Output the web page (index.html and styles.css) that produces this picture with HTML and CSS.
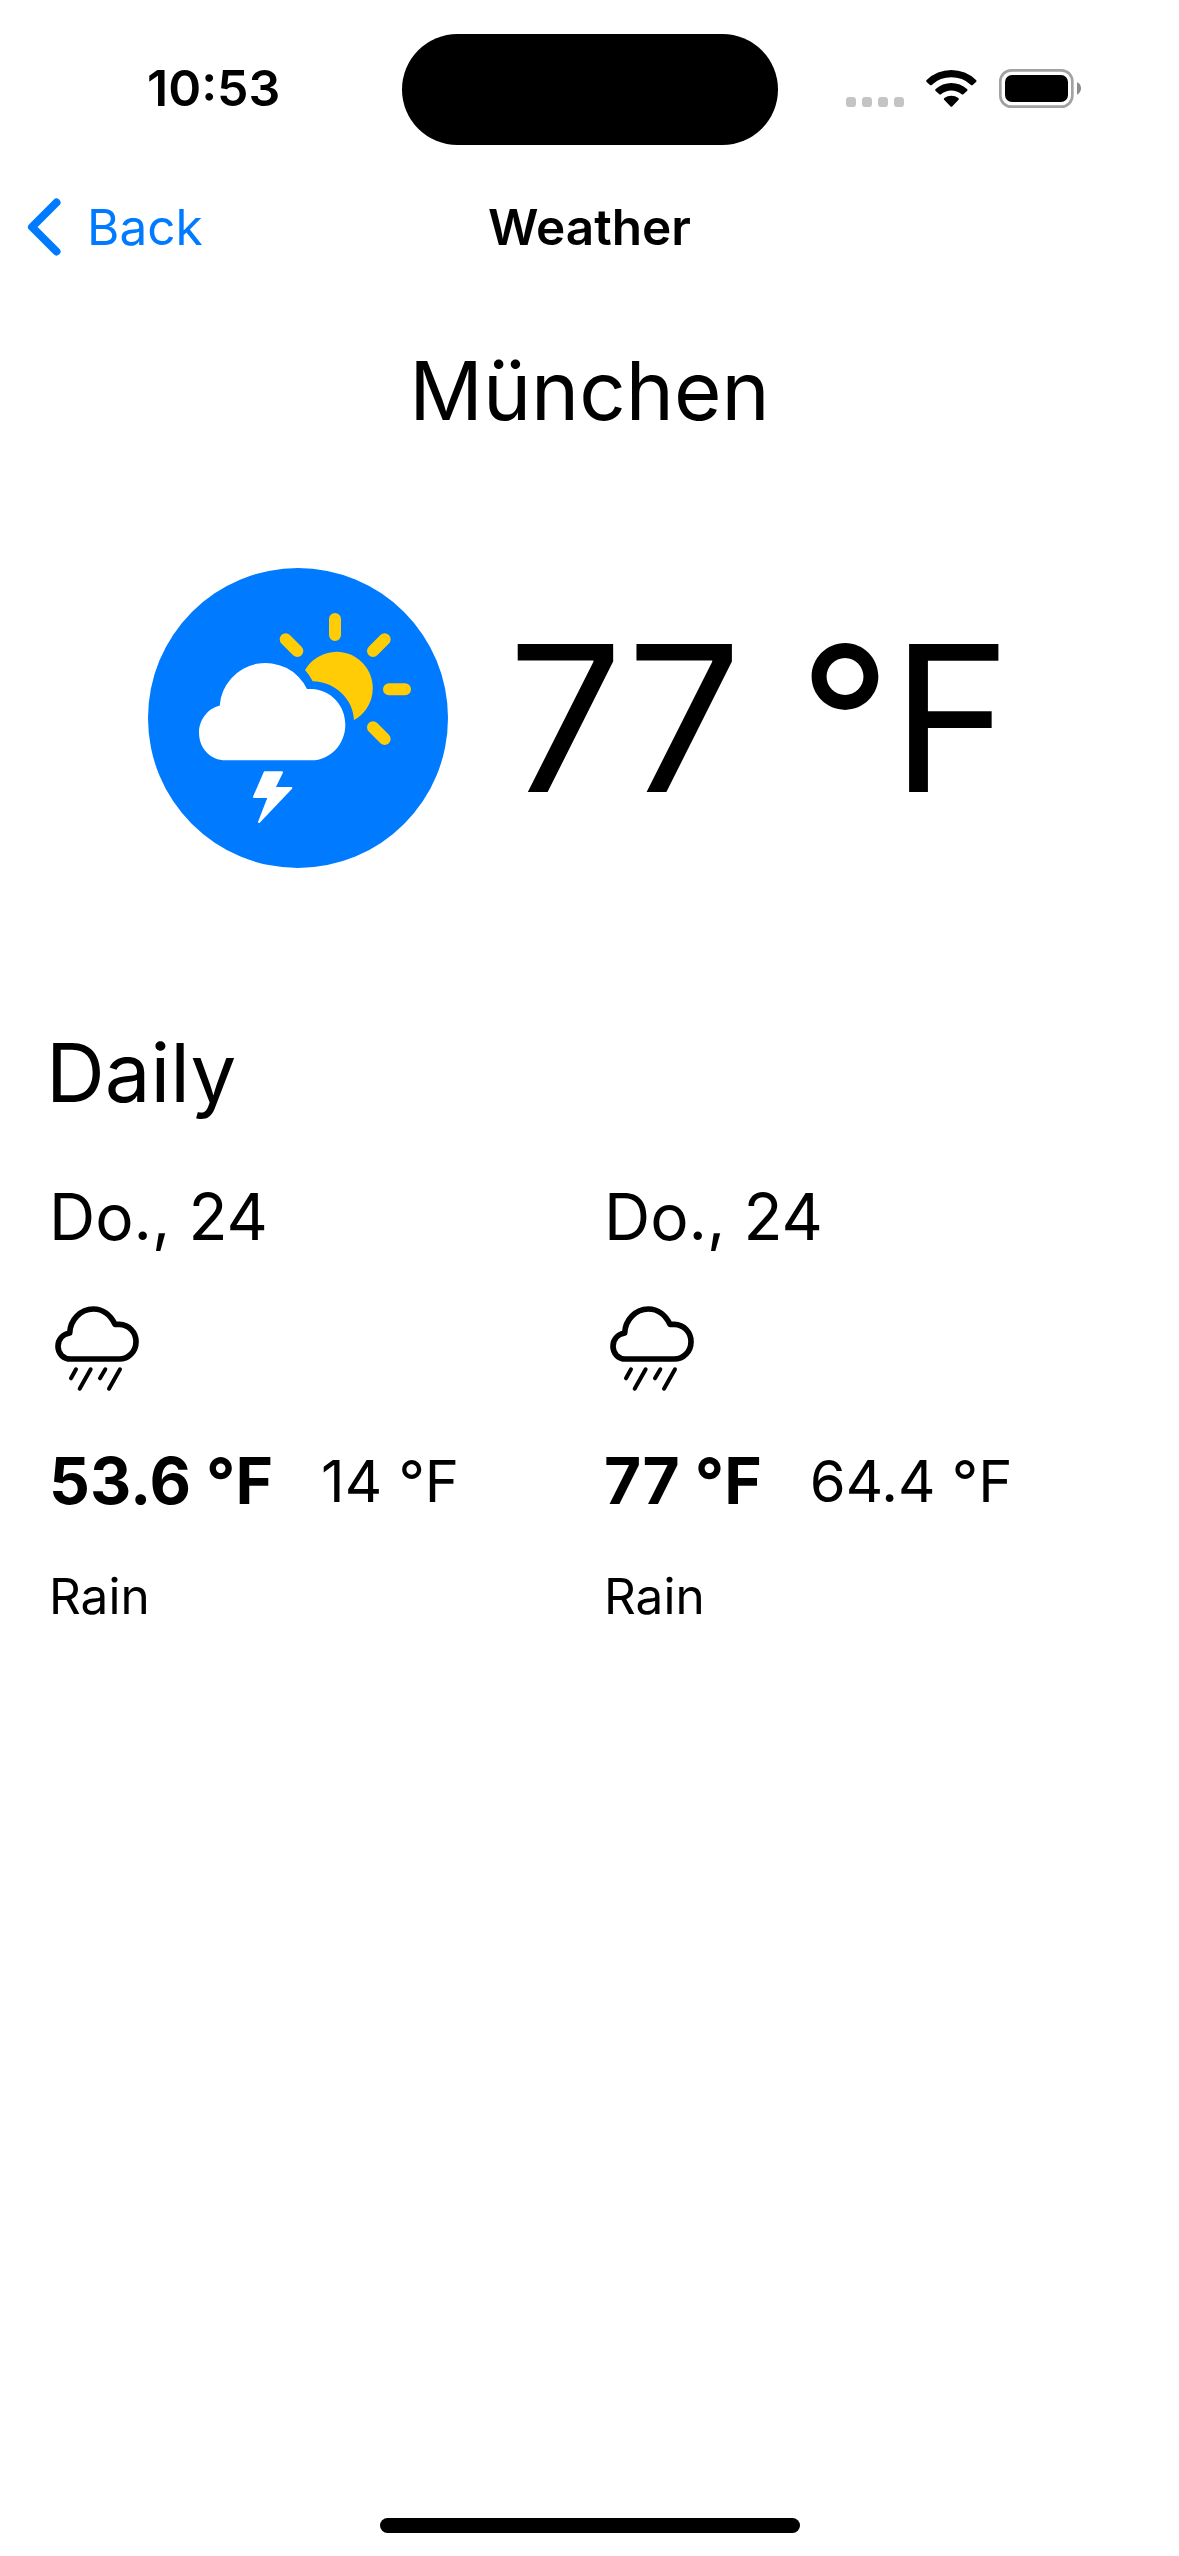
FILE: index.html
```html
<!DOCTYPE html>
<html lang="de">
<head>
<meta charset="utf-8">
<title>Weather</title>
<link rel="stylesheet" href="styles.css">
</head>
<body>
<svg class="sprite" aria-hidden="true">
  <symbol id="rain" viewBox="57 60 288 288">
    <path class="rain-cloud" d="M122 237C100 237 84 221 84 199C84 178 98 163 119 159C121 119 152 87 190 87C219 87 242 106 255 133L268 133C297 134 318 157 318 185C318 214 296 237 267 237Z"/>
    <path class="rain-drops" d="M138 268L123 295M182 268L149 326M226 268L210 295M270 268L237 326"/>
  </symbol>
</svg>
<div class="screen">
  <header class="status">
    <span class="time">10:53</span>
    <div class="island"></div>
    <svg class="status-icons" viewBox="198 108 708 126">
      <g fill="#c4c4c4">
        <rect x="198" y="198" width="30" height="30" rx="10"/>
        <rect x="246" y="198" width="30" height="30" rx="10"/>
        <rect x="294" y="198" width="30" height="30" rx="10"/>
        <rect x="342" y="198" width="30" height="30" rx="10"/>
      </g>
      <path d="M440 147A106 106 0 0 1 588 147Q591 150 588 153L578 162Q575 164 572 161A86 86 0 0 0 456 161Q453 164 450 162L440 153Q437 150 440 147ZM467 174A70 70 0 0 1 561 174Q564 177 561 180L550 190Q547 192 544 189A48 48 0 0 0 484 189Q481 192 478 190L467 180Q464 177 467 174ZM493 201A35 35 0 0 1 535 201Q538 204 535 207L517 226Q514 229 511 226L493 207Q490 204 493 201Z"/>
      <rect x="661" y="118" width="216" height="109" rx="33" fill="none" stroke="#a2a2a2" stroke-width="8"/>
      <rect x="675" y="132" width="189" height="81" rx="21"/>
      <path d="M891 153Q903 159 903 171.500Q903 184 891 191Z" fill="#8c8c8c"/>
    </svg>
  </header>
  <nav class="nav">
    <a class="back">
      <svg class="chevron" viewBox="0 0 34 58"><path d="M29.500 4.500L5 29L29.500 53.500"/></svg>
      <span>Back</span>
    </a>
    <h1 class="title">Weather</h1>
  </nav>
  <main>
    <h2 class="city">München</h2>
    <section class="current">
      <svg class="badge" viewBox="54 54 900 900">
        <circle cx="504" cy="504" r="450" fill="#007aff"/>
        <g fill="#ffcc05">
          <path d="M525 360A109 109 0 1 1 672 510C669 447 616 396 548 394Q538 374 525 360Z"/>
          <path class="rays" d="M615 207V255M777 418H825M764 268L729 303M467 268L502 303M729 532L764 567"/>
        </g>
        <g fill="#fff">
          <path d="M288 631C240 631 207 594 207 548C207 508 235 474 269 467A138 138 0 0 1 531 417L545 417C603 419 646 467 646 524C646 583 600 631 545 631Z"/>
          <path class="bolt" d="M404 667H456L433 714H484L387 816L416 741H372Z"/>
        </g>
      </svg>
      <span class="now">77 °F</span>
    </section>
    <h2 class="heading">Daily</h2>
    <section class="days">
      <article class="day">
        <div class="date">Do., 24</div>
        <svg class="rain"><use href="#rain"/></svg>
        <div class="temps"><strong class="high">53.6 °F</strong><span class="low">14 °F</span></div>
        <div class="text">Rain</div>
      </article>
      <article class="day">
        <div class="date">Do., 24</div>
        <svg class="rain"><use href="#rain"/></svg>
        <div class="temps"><strong class="high">77 °F</strong><span class="low">64.4 °F</span></div>
        <div class="text">Rain</div>
      </article>
    </section>
  </main>
  <div class="home"></div>
</div>
</body>
</html>
```
FILE: styles.css
```css
* { box-sizing: border-box; }
body { margin: 0; background: #fff; color: #000; font-family: Inter, "Liberation Sans", sans-serif; }
h1, h2 { margin: 0; font-weight: 400; }
.sprite { display: none; }
.screen { width: 1179px; height: 2556px; display: flex; flex-direction: column; overflow: hidden; white-space: nowrap; }

.status { height: 176px; display: grid; grid-template-columns: 1fr 376px 1fr; align-items: center; }
.time { padding-left: 147px; font-size: 50px; font-weight: 600; }
.island { height: 111px; margin-top: 2px; border-radius: 56px; background: #000; }
.status-icons { width: 236px; height: 42px; margin-left: 68px; }

.nav { height: 102px; display: grid; grid-template-columns: 1fr auto 1fr; align-items: center; }
.back { display: flex; align-items: center; gap: 26px; padding-left: 27px; color: #007aff; font-size: 49.5px; }
.chevron { width: 34px; height: 58px; fill: none; stroke: #007aff; stroke-width: 8; stroke-linecap: round; stroke-linejoin: round; }
.title { font-size: 49.5px; font-weight: 600; }

.city { margin-top: 64px; font-size: 81.5px; line-height: 98px; text-align: center; }
.current { margin-top: 128px; padding-left: 148px; display: flex; align-items: center; gap: 60px; }
.badge { width: 300px; height: 300px; flex: none; }
.rays { stroke: #ffcc05; stroke-width: 36; stroke-linecap: round; }
.bolt { stroke: #fff; stroke-width: 6; stroke-linejoin: round; }
.now { font-size: 203px; line-height: 300px; }

.heading { margin: 156px 0 0 46px; font-size: 81.5px; line-height: 98px; }
.days { margin: 56px 0 0 49px; display: grid; grid-template-columns: 555px 555px; }
.date { font-size: 64px; line-height: 78px; }
.rain { display: block; width: 96px; height: 96px; margin-top: 44px; }
.rain-cloud { fill: none; stroke: #000; stroke-width: 17; stroke-linejoin: round; }
.rain-drops { fill: none; stroke: #000; stroke-width: 12; stroke-linecap: round; }
.temps { margin-top: 46px; display: flex; align-items: center; gap: 48px; line-height: 78px; }
.high { font-size: 64px; font-weight: 700; }
.low { font-size: 58px; }
.text { margin-top: 46px; font-size: 49.5px; line-height: 60px; }

.home { width: 420px; height: 15px; margin: auto auto 23px; border-radius: 8px; background: #000; }
```
